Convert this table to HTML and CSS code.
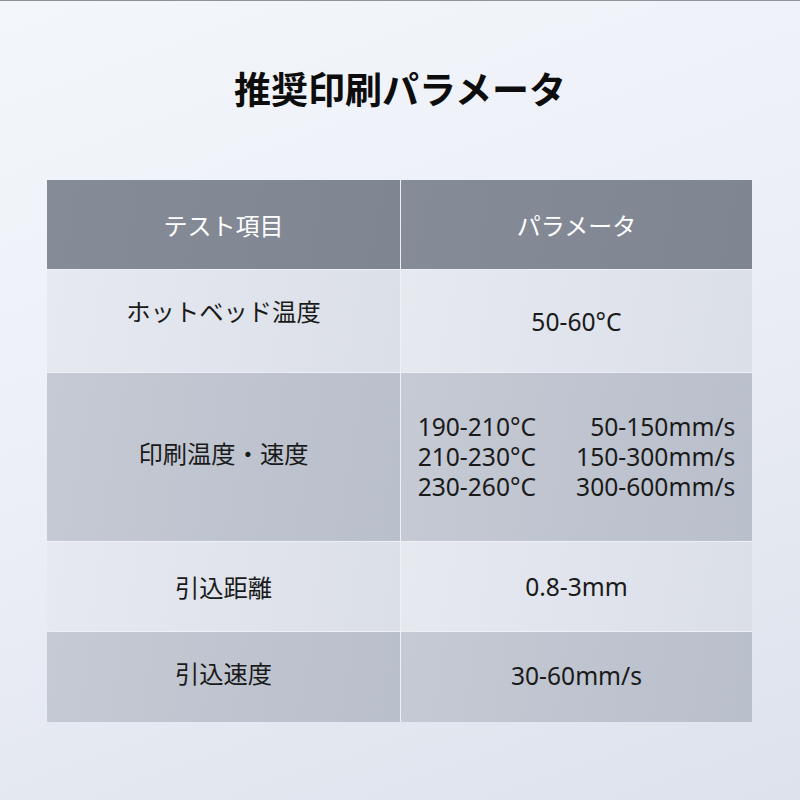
FILE: index.html
```html
<!DOCTYPE html>
<html lang="ja">
<head>
<meta charset="utf-8">
<link rel="stylesheet" href="styles.css">
</head>
<body>
<div class="page">
  <h1 class="title">推奨印刷パラメータ</h1>
  <div class="table">
    <div class="cell head">テスト項目</div>
    <div class="cell head">パラメータ</div>

    <div class="cell light r1"><span class="lift">ホットベッド温度</span></div>
    <div class="cell light r1 num">50-60°C</div>

    <div class="cell dark r2"><span class="up">印刷温度・速度</span></div>
    <div class="cell dark r2 num">
      <div class="multi">
        <span class="t">190-210°C</span><span class="s">50-150mm/s</span>
        <span class="t">210-230°C</span><span class="s">150-300mm/s</span>
        <span class="t">230-260°C</span><span class="s">300-600mm/s</span>
      </div>
    </div>

    <div class="cell light r3">引込距離</div>
    <div class="cell light r3 num">0.8-3mm</div>

    <div class="cell dark r4"><span class="up">引込速度</span></div>
    <div class="cell dark r4 num"><span class="up2">30-60mm/s</span></div>
  </div>
</div>
</body>
</html>
```

FILE: styles.css
```css
html, body {
  margin: 0;
  padding: 0;
}
body {
  width: 800px;
  height: 800px;
  overflow: hidden;
}
.page {
  box-sizing: border-box;
  width: 800px;
  height: 800px;
  border-top: 1px solid #8e9399;
  background: linear-gradient(160deg, #f3f6fb 0%, #eceff6 45%, #dde2ec 100%);
  padding-top: 65px;
  font-family: "Noto Sans", "Noto Sans CJK JP", sans-serif;
}
.title {
  margin: 0;
  text-align: center;
  font-family: "Noto Sans CJK JP", sans-serif;
  font-weight: 700;
  font-size: 37px;
  line-height: 44px;
  color: #0d0d0d;
}
.table {
  margin: 70px 0 0 47px;
  width: 705px;
  display: grid;
  grid-template-columns: 353px 351px;
  grid-template-rows: 89px 102px 168px 89px 90px;
  gap: 1px;
  background: #eef0f5;
}
.cell {
  display: flex;
  align-items: center;
  justify-content: center;
  font-size: 24.3px;
  color: #1a1a1a;
  font-family: "Noto Sans CJK JP", sans-serif;
}
.cell.num {
  font-family: "Noto Sans", "Noto Sans CJK JP", sans-serif;
  font-size: 24.6px;
}
.head {
  background: linear-gradient(100deg, #868c97 0%, #7f8591 100%);
  color: #ffffff;
  font-size: 24px;
}
.light {
  background: linear-gradient(100deg, #e6e9f0 0%, #dbdfe8 100%);
}
.dark {
  background: linear-gradient(100deg, #c5cad4 0%, #b9bfcb 100%);
}
.lift {
  position: relative;
  top: -11px;
}
.up {
  position: relative;
  top: -5px;
}
.up2 {
  position: relative;
  top: -2px;
}
.multi {
  display: grid;
  grid-template-columns: auto auto;
  column-gap: 40px;
  line-height: 30px;
}
.multi .t {
  text-align: left;
}
.multi .s {
  text-align: right;
}
```
